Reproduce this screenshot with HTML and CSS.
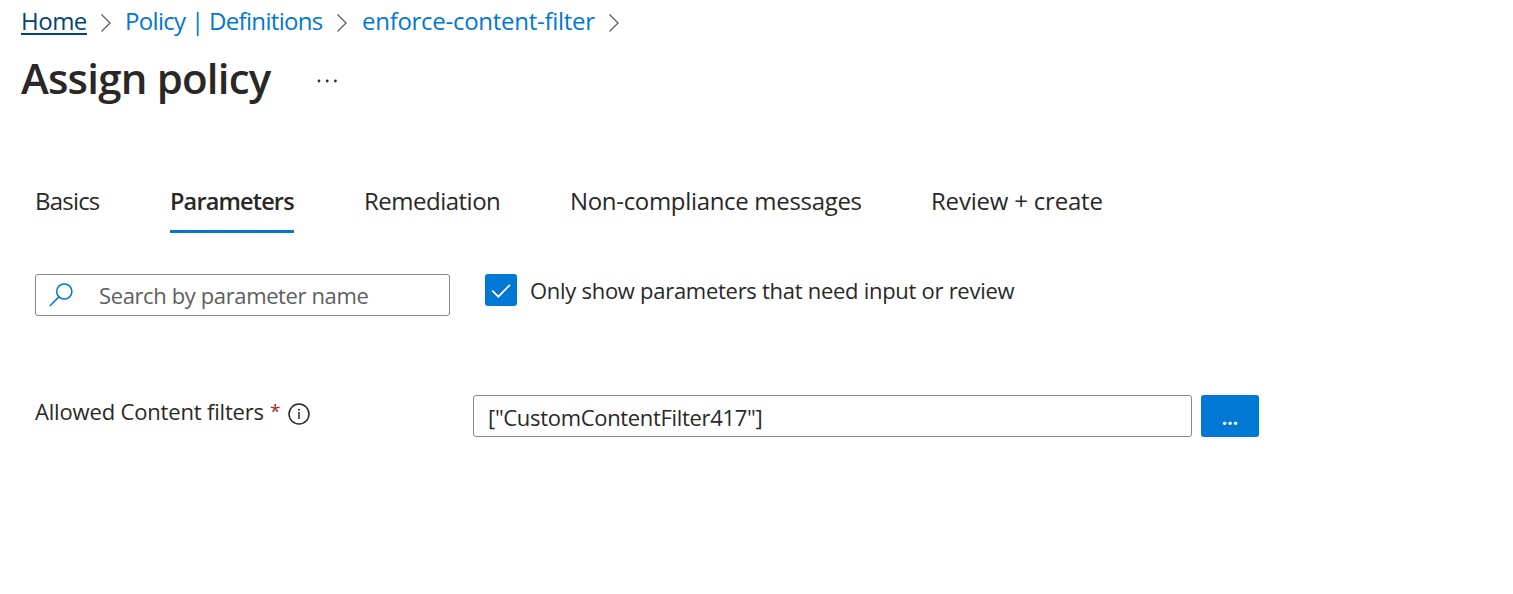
FILE: index.html
```
<!DOCTYPE html>
<html lang="en">
<head>
<meta charset="utf-8">
<title>Assign policy</title>
<link rel="stylesheet" href="styles.css">
</head>
<body>
<nav class="breadcrumb">
  <a class="crumb crumb-home">Home</a>
  <svg class="chevron chevron-1" width="12" height="20" viewBox="0 0 12 20"><path d="M1.5 1.5 L10 10 L1.5 18.5"/></svg>
  <a class="crumb crumb-policy">Policy | Definitions</a>
  <svg class="chevron chevron-2" width="12" height="20" viewBox="0 0 12 20"><path d="M1.5 1.5 L10 10 L1.5 18.5"/></svg>
  <a class="crumb crumb-filter">enforce-content-filter</a>
  <svg class="chevron chevron-3" width="12" height="20" viewBox="0 0 12 20"><path d="M1.5 1.5 L10 10 L1.5 18.5"/></svg>
</nav>
<header class="title-row">
  <h1 class="title">Assign policy</h1>
  <svg class="more" width="22" height="4" viewBox="0 0 22 4"><circle cx="2" cy="2" r="1.4"/><circle cx="10.2" cy="2" r="1.4"/><circle cx="18.4" cy="2" r="1.4"/></svg>
</header>
<div class="tabs">
  <div class="tab tab-basics">Basics</div>
  <div class="tab tab-parameters active">Parameters</div>
  <div class="tab tab-remediation">Remediation</div>
  <div class="tab tab-messages">Non-compliance messages</div>
  <div class="tab tab-review">Review + create</div>
</div>
<div class="filters">
  <div class="search">
    <svg class="search-icon" width="26" height="26" viewBox="0 0 26 26"><circle cx="16.3" cy="9.5" r="7.6"/><path d="M10.9 14.9 L1.8 24"/></svg>
    <span class="placeholder">Search by parameter name</span>
  </div>
  <span class="checkbox"><svg width="32" height="32" viewBox="0 0 32 32"><path d="M7.3 16.6 L13.3 22.6 L25 10.8"/></svg></span>
  <span class="checkbox-label">Only show parameters that need input or review</span>
</div>
<div class="field">
  <div class="field-label">
    <span class="field-name">Allowed Content filters</span>
    <span class="required">*</span>
    <svg class="info" width="22" height="22" viewBox="0 0 22 22"><circle class="ring" cx="11" cy="11" r="10"/><path class="stem" d="M11 9 V16"/><circle class="dot" cx="11" cy="6.7" r="1"/></svg>
  </div>
  <div class="value"><span>["CustomContentFilter417"]</span></div>
  <div class="browse">...</div>
</div>
</body>
</html>
```
FILE: styles.css
```
* { box-sizing: border-box; }
body { margin: 0; padding-top: 6px; background: #fff; color: #292827; font-family: "Open Sans", "Noto Sans", sans-serif; white-space: nowrap; }

.breadcrumb { display: flex; align-items: center; height: 30px; padding-left: 21px; font-size: 24px; line-height: 30px; color: #0078d4; }
.crumb-home { align-self: flex-start; width: 66px; height: 29px; border-bottom: 2px solid #004578; color: #004578; letter-spacing: -0.5px; }
.crumb-policy { width: 199px; letter-spacing: -0.68px; }
.crumb-filter { width: 234px; letter-spacing: -0.28px; }
.chevron { flex: none; margin-top: 3px; fill: none; stroke: #605e5c; stroke-width: 1.3; }
.chevron-1 { margin-left: 13px; margin-right: 13px; }
.chevron-2 { margin-left: 12px; margin-right: 14px; }
.chevron-3 { margin-left: 12px; }

.title-row { display: flex; align-items: center; height: 56px; margin-top: 14px; padding-left: 21px; }
.title { width: 252px; margin: 0; font-size: 42px; font-weight: 600; line-height: 56px; letter-spacing: -0.8px; }
.more { margin: 6px 0 0 44px; fill: #323130; }

.tabs { display: flex; gap: 70px; margin-top: 80px; padding-left: 35px; }
.tab { height: 47px; font-size: 24px; line-height: 30px; }
.tab-basics { width: 65px; letter-spacing: -0.8px; }
.tab-parameters { width: 124px; font-size: 23.5px; font-weight: 600; letter-spacing: -0.85px; }
.tab-remediation { width: 136px; letter-spacing: -0.5px; }
.tab-messages { width: 291px; letter-spacing: -0.32px; }
.tab-review { letter-spacing: -0.2px; }
.active { border-bottom: 3px solid #0078d4; }

.filters { display: flex; margin-top: 41px; padding-left: 35px; font-size: 22px; }
.search { display: flex; align-items: center; width: 415px; height: 42px; padding-left: 12px; border: 1px solid #8a8886; border-radius: 3px; }
.search-icon { fill: none; stroke: #0078d4; stroke-width: 1.5; }
.placeholder { margin-left: 25px; color: #605e5c; letter-spacing: -0.38px; line-height: 30px; }
.checkbox { width: 32px; height: 32px; margin-left: 35px; border-radius: 3px; background: #0078d4; }
.checkbox svg { display: block; fill: none; stroke: #fff; stroke-width: 1.8; }
.checkbox-label { margin-left: 13px; line-height: 33px; letter-spacing: -0.28px; }

.field { display: flex; margin-top: 79px; padding-left: 35px; font-size: 22px; }
.field-label { display: flex; width: 438px; height: 34px; line-height: 32px; }
.field-name { width: 229px; letter-spacing: -0.17px; }
.required { width: 10px; margin-left: 6px; color: #a4262c; font-size: 19px; }
.info { margin: 8px 0 0 8px; fill: none; stroke: #292827; }
.ring { stroke-width: 1.5; }
.stem { stroke-width: 1.5; }
.dot { fill: #292827; stroke: none; }
.value { width: 719px; height: 42px; padding: 1px 0 0 14px; border: 1px solid #8a8886; border-radius: 3px; line-height: 40px; letter-spacing: -0.32px; }
.browse { width: 58px; height: 42px; margin-left: 9px; border-radius: 3px; background: #0078d4; color: #fff; font-size: 19px; font-weight: 700; line-height: 46px; text-align: center; }
```
